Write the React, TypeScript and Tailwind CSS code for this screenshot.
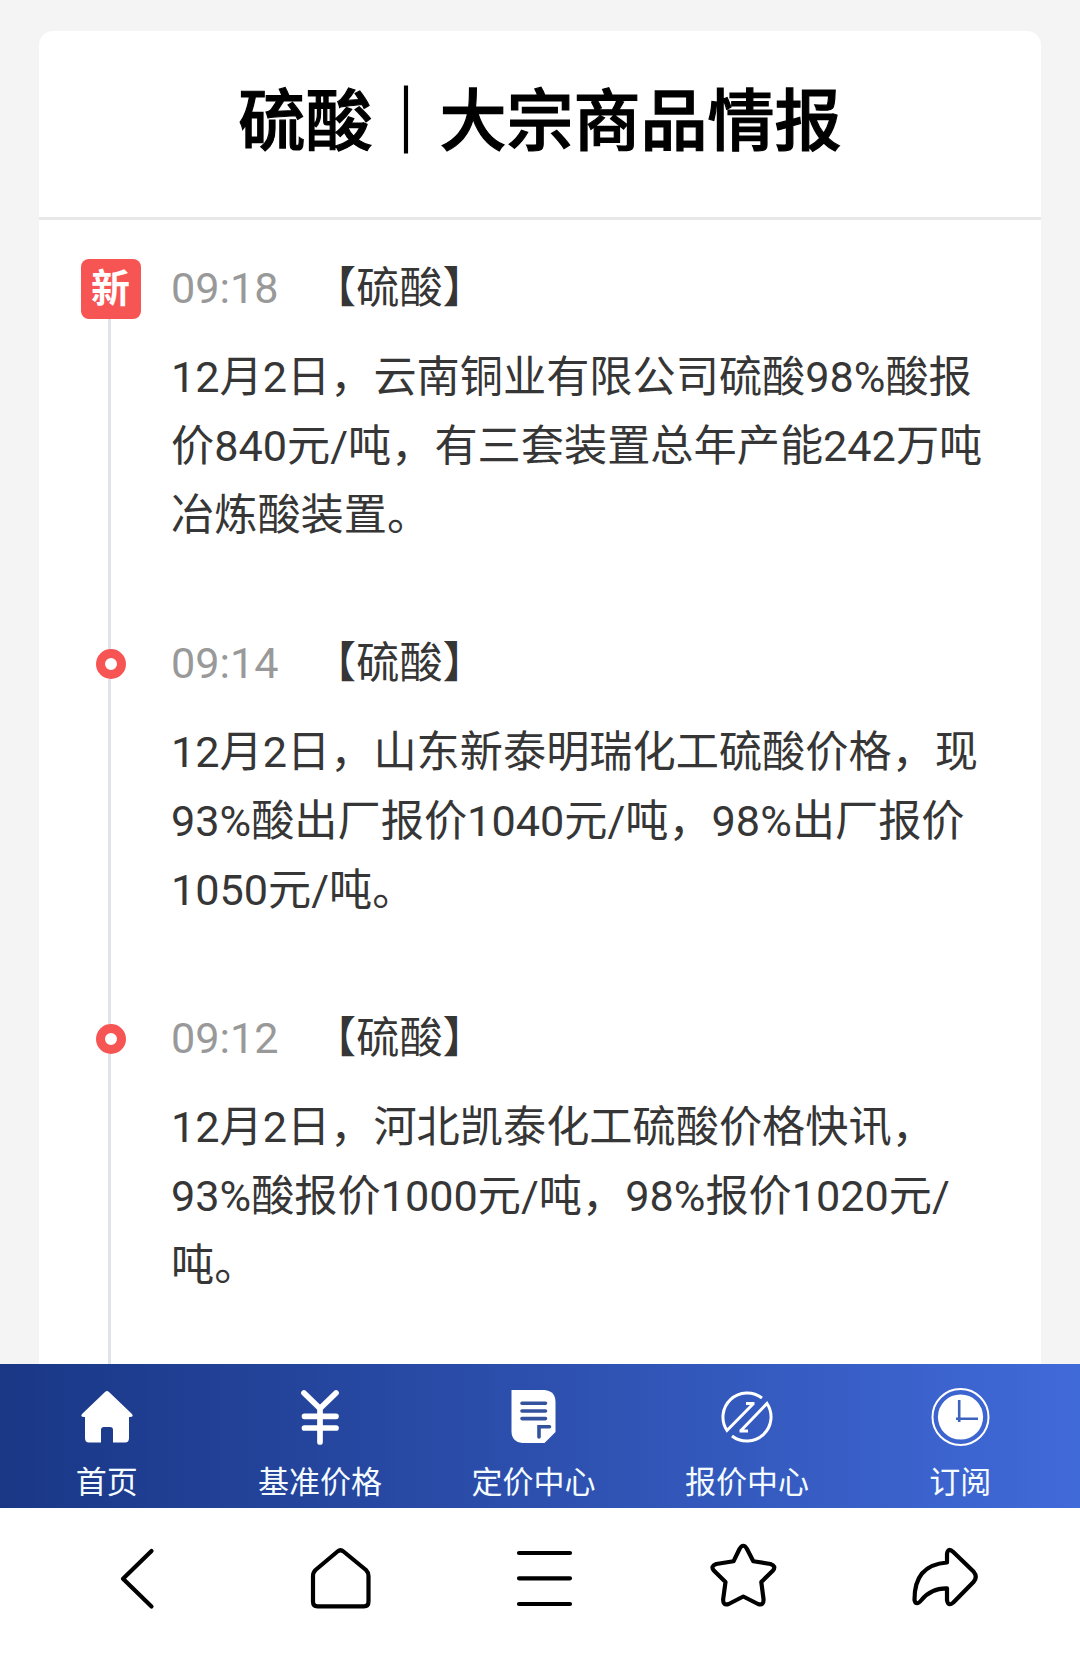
import type { ReactNode } from 'react';

type NewsItem = { time: string; tag: string; text: string; fresh?: boolean };

const NEWS: NewsItem[] = [
  { time: '09:18', tag: '【硫酸】', text: '12月2日，云南铜业有限公司硫酸98%酸报价840元/吨，有三套装置总年产能242万吨冶炼酸装置。', fresh: true },
  { time: '09:14', tag: '【硫酸】', text: '12月2日，山东新泰明瑞化工硫酸价格，现93%酸出厂报价1040元/吨，98%出厂报价1050元/吨。' },
  { time: '09:12', tag: '【硫酸】', text: '12月2日，河北凯泰化工硫酸价格快讯，93%酸报价1000元/吨，98%报价1020元/吨。' },
];

const TABS: { label: string; icon: ReactNode }[] = [
  {
    label: '首页',
    icon: (
      <path
        d="M28 5Q30 3 32 5L55 27Q57 30 53 30H52V51Q52 55.500 48 55.500H36V43Q36 40 33 40H27Q24 40 24 43V55.500H12Q8 55.500 8 51V30H7Q3 30 5 27Z"
        fill="currentColor"
      />
    ),
  },
  {
    label: '基准价格',
    icon: (
      <path
        d="M14 6L30 21.500L46 6M30 21.500V55M14.500 29.300H46M14.500 41H46"
        fill="none" stroke="currentColor" strokeWidth="5.700" strokeLinecap="round" strokeLinejoin="round"
      />
    ),
  },
  {
    label: '定价中心',
    icon: (
      <>
        <path d="M8.500 3H41.500Q52.500 4 52.500 15V45L41.500 56H19.500Q8.500 55 8.500 44Z" fill="currentColor" />
        <path
          d="M19 16.300H42.500M19 24H42.500M19 31.600H42.500M46.500 39.800H36V50"
          fill="none" stroke="#35529f" strokeWidth="3.600" strokeLinecap="round"
        />
      </>
    ),
  },
  {
    label: '报价中心',
    icon: (
      <path
        d="M45 11A24.200 24.200 0 0 0 10 43.500L36 17M29 16.500H37.500M15 49A24.200 24.200 0 0 0 50 16.500L24 43.500M31 44H22.500"
        fill="none" stroke="currentColor" strokeWidth="3"
      />
    ),
  },
  {
    label: '订阅',
    icon: (
      <>
        <circle cx="30.500" cy="30" r="28" fill="none" stroke="currentColor" strokeWidth="2" />
        <circle cx="30.500" cy="30" r="22.600" fill="currentColor" />
        <path d="M29.200 13V35M26 31.700H48" stroke="#3d62bd" strokeWidth="2.600" />
      </>
    ),
  },
];

const BROWSER_ICONS: { name: string; path: string }[] = [
  { name: 'back', path: 'M49.500 8L21 35.700L49.500 63.500' },
  { name: 'home', path: 'M33.500 8.500Q36.500 6 39.500 8.500L62 27Q64.500 29.500 64.500 33V58.500Q64.500 63.300 60 63.300H13.500Q9 63.300 9 58.500V33Q9 29.500 11.500 27Z' },
  { name: 'menu', path: 'M13 10H64M13 35.300H64M13 61H64' },
  { name: 'star', path: 'M31.500 6Q35.300 -0.500 39 6L45.300 18.300L62.500 21Q68.500 23 65 27.500L53.300 39L55.500 56Q56 63 50 61L35.300 53.500L20.700 61Q14.700 63 15.200 56L17.500 39L5.800 27.500Q2.200 23 8.200 21L25.500 18.300Z' },
  { name: 'share', path: 'M37 19.500V11Q38 4 43.300 9L63.500 28.500Q68 34 63.500 39L43.300 59.500Q38 64 37 57V45.300Q21 45 11.500 57Q6 63.500 4.500 57Q4 22 37 19.500Z' },
];

function Marker({ fresh }: { fresh?: boolean }) {
  if (fresh) {
    return (
      <span className="flex size-15 items-center justify-center rounded-lg bg-[#f75454] pt-px pr-px text-[39px] leading-none font-bold text-white">
        新
      </span>
    );
  }
  return <span className="mt-[15px] size-[30px] rounded-full border-9 border-[#f75454] bg-white" />;
}

function TimelineItem({ item }: { item: NewsItem }) {
  return (
    <li className="flex h-[375px]">
      <div className="flex w-[60px] shrink-0 flex-col items-center">
        <Marker fresh={item.fresh} />
        <span className="mr-[3px] -mb-[15px] w-[3px] flex-1 bg-[#dfe4e8]" />
      </div>
      <div className="ml-[30px] w-[815px] text-[43.2px] text-[#363636]">
        <div className="flex h-[60px] items-center gap-[34px] leading-[60px]">
          <time className="w-[108px] text-[#999999]">{item.time}</time>
          <span>{item.tag}</span>
        </div>
        <p className="mt-[24px] leading-[69px]">{item.text}</p>
      </div>
    </li>
  );
}

export default function App() {
  return (
    <div className="flex h-[1671px] w-[1080px] flex-col overflow-hidden bg-[#f4f4f4] font-['Roboto','Noto_Sans_CJK_SC',sans-serif]">
      <main className="h-[1364px] overflow-hidden px-[39px] pt-[31px]">
        <article className="rounded-t-[14px] bg-white">
          <h1 className="h-[189px] border-b-3 border-[#e8e8e8] text-center text-[67px] leading-[183px] font-medium text-black [-webkit-text-stroke:1.2px_black]">
            硫酸｜大宗商品情报
          </h1>
          <ul className="pt-[39px] pl-[42px]">
            {NEWS.map(item => <TimelineItem key={item.time} item={item} />)}
          </ul>
        </article>
      </main>

      <nav className="grid h-[144px] grid-cols-5 bg-linear-to-r from-[#1a3786] to-[#416ad9] pr-[13px] text-[#f4fcff]">
        {TABS.map(tab => (
          <a key={tab.label} className="flex flex-col items-center pt-[23px]">
            <svg viewBox="0 0 60 60" className="size-15 text-white">{tab.icon}</svg>
            <span className="mt-[14px] text-[31px] leading-[44px]">{tab.label}</span>
          </a>
        ))}
      </nav>

      <footer className="grid h-[163px] grid-cols-5 bg-white pr-[33px] pl-[37px]">
        {BROWSER_ICONS.map(icon => (
          <button key={icon.name} aria-label={icon.name} className="flex justify-center pt-[35px]">
            <svg viewBox="0 0 72 72" className="size-18" fill="none" stroke="black" strokeWidth="4.200" strokeLinecap="round" strokeLinejoin="round">
              <path d={icon.path} />
            </svg>
          </button>
        ))}
      </footer>
    </div>
  );
}
